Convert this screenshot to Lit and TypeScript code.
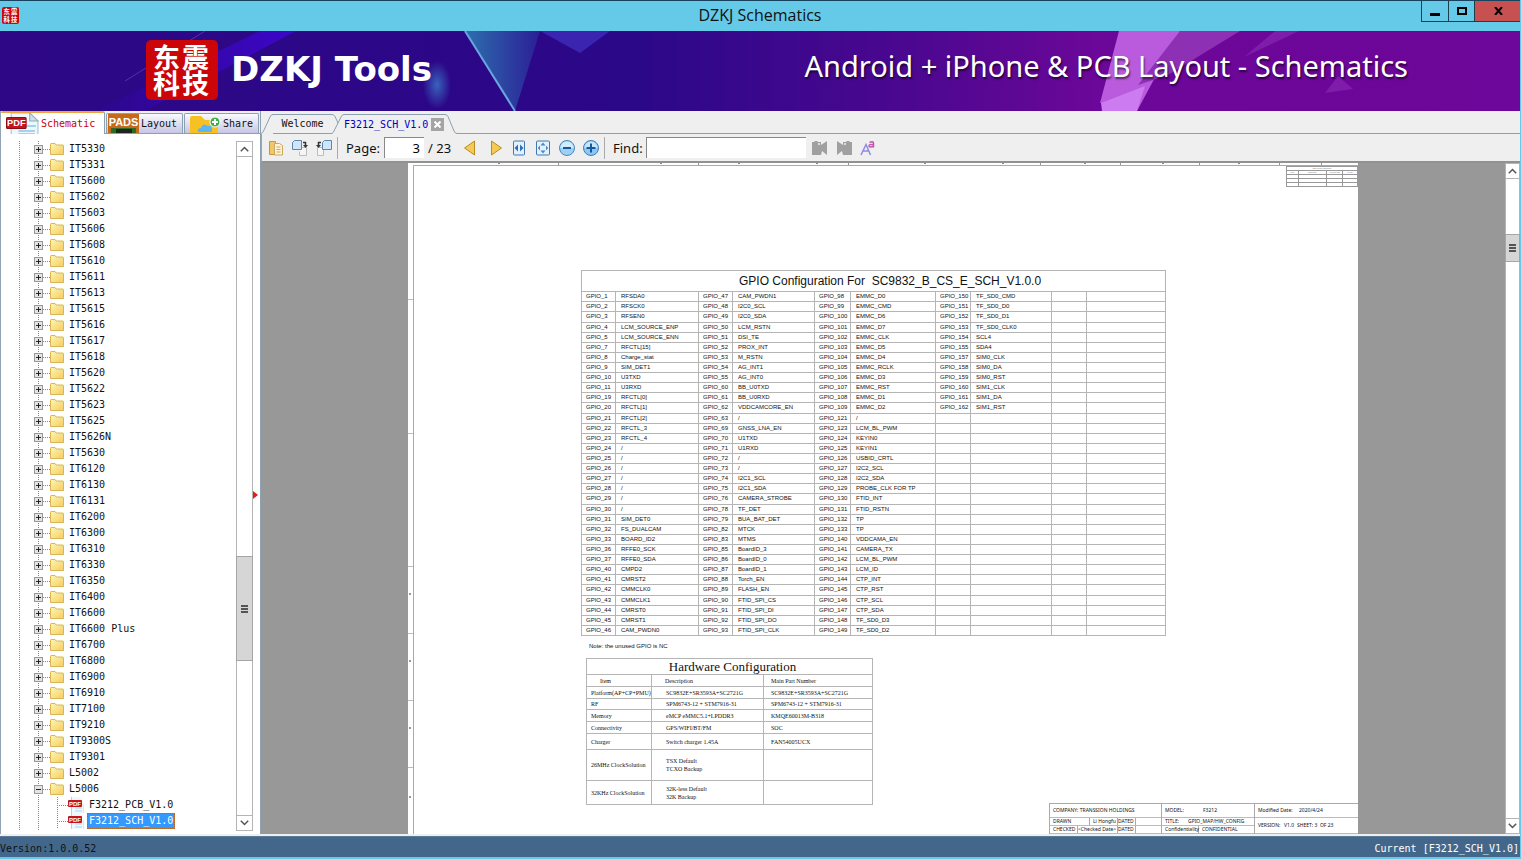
import { LitElement, html, css, svg } from "lit";
import { customElement, property, state } from "lit/decorators.js";

const FOLDERS = [
  "IT5330", "IT5331", "IT5600", "IT5602", "IT5603", "IT5606", "IT5608", "IT5610", "IT5611", "IT5613",
  "IT5615", "IT5616", "IT5617", "IT5618", "IT5620", "IT5622", "IT5623", "IT5625", "IT5626N", "IT5630",
  "IT6120", "IT6130", "IT6131", "IT6200", "IT6300", "IT6310", "IT6330", "IT6350", "IT6400", "IT6600",
  "IT6600 Plus", "IT6700", "IT6800", "IT6900", "IT6910", "IT7100", "IT9210", "IT9300S", "IT9301", "L5002",
];

const GPIO_COLUMNS: [string, string][] = [
  ["1 2 3 4 5 7 8 9 10 11 19 20 21 22 23 24 25 26 27 28 29 30 31 32 33 36 37 40 41 42 43 44 45 46",
    "RFSDA0|RFSCK0|RFSEN0|LCM_SOURCE_ENP|LCM_SOURCE_ENN|RFCTL[15]|Charge_stat|SIM_DET1|U3TXD|U3RXD|RFCTL[0]|RFCTL[1]|RFCTL[2]|RFCTL_3|RFCTL_4|/|/|/|/|/|/|/|SIM_DET0|FS_DUALCAM|BOARD_ID2|RFFE0_SCK|RFFE0_SDA|CMPD2|CMRST2|CMMCLK0|CMMCLK1|CMRST0|CMRST1|CAM_PWDN0"],
  ["47 48 49 50 51 52 53 54 55 60 61 62 63 69 70 71 72 73 74 75 76 78 79 82 83 85 86 87 88 89 90 91 92 93",
    "CAM_PWDN1|I2C0_SCL|I2C0_SDA|LCM_RSTN|DSI_TE|PROX_INT|M_RSTN|AG_INT1|AG_INT0|BB_U0TXD|BB_U0RXD|VDDCAMCORE_EN|/|GNSS_LNA_EN|U1TXD|U1RXD|/|/|I2C1_SCL|I2C1_SDA|CAMERA_STROBE|TF_DET|BUA_BAT_DET|MTCK|MTMS|BoardID_3|BoardID_0|BoardID_1|Torch_EN|FLASH_EN|FTID_SPI_CS|FTID_SPI_DI|FTID_SPI_DO|FTID_SPI_CLK"],
  ["98 99 100 101 102 103 104 105 106 107 108 109 121 123 124 125 126 127 128 129 130 131 132 133 140 141 142 143 144 145 146 147 148 149",
    "EMMC_D0|EMMC_CMD|EMMC_D6|EMMC_D7|EMMC_CLK|EMMC_D5|EMMC_D4|EMMC_RCLK|EMMC_D3|EMMC_RST|EMMC_D1|EMMC_D2|/|LCM_BL_PWM|KEYIN0|KEYIN1|USBID_CRTL|I2C2_SCL|I2C2_SDA|PROBE_CLK FOR TP|FTID_INT|FTID_RSTN|TP|TP|VDDCAMA_EN|CAMERA_TX|LCM_BL_PWM|LCM_ID|CTP_INT|CTP_RST|CTP_SCL|CTP_SDA|TF_SD0_D3|TF_SD0_D2"],
  ["150 151 152 153 154 155 157 158 159 160 161 162",
    "TF_SD0_CMD|TF_SD0_D0|TF_SD0_D1|TF_SD0_CLK0|SCL4|SDA4|SIM0_CLK|SIM0_DA|SIM0_RST|SIM1_CLK|SIM1_DA|SIM1_RST"],
];

const GPIO = GPIO_COLUMNS.map(([pins, names]) => {
  const labels = names.split("|");
  return pins.split(" ").map((p, i) => [`GPIO_${p}`, labels[i]]);
});

const HARDWARE = [
  ["h12", "Platform(AP+CP+PMU)", "SC9832E+SR3593A+SC2721G", "SC9832E+SR3593A+SC2721G"],
  ["h11", "RF", "SPM6743-12 + STM7916-31", "SPM6743-12 + STM7916-31"],
  ["h12", "Memory", "eMCP eMMC5.1+LPDDR3", "KMQE60013M-B318"],
  ["h12", "Connectivity", "GPS/WIFI/BT/FM", "SOC"],
  ["h16", "Charger", "Switch charger 1.45A", "FAN54005UCX"],
  ["h31", "26MHz ClockSolution", "TSX Default\nTCXO Backup", ""],
  ["h24", "32KHz ClockSolution", "32K-less Default\n32K Backup", ""],
];

const chevron = (down: boolean) => html`<svg width="9" height="6" viewBox="0 0 9 6">
  <path d=${down ? "M.8.8 4.5 4.5 8.2.8" : "M.8 5.2 4.5 1.5 8.2 5.2"} fill="none" stroke="#555" stroke-width="1.5"/></svg>`;

const folderIcon = html`<svg width="14" height="12" viewBox="0 0 14 12">
  <defs><linearGradient id="fold" x2="1" y2="1"><stop stop-color="#fff6b8"/><stop offset="1" stop-color="#f3cd62"/></linearGradient></defs>
  <path d="M.5 11.5V1.2Q.5.5 1.2.5H5l1.2 1.5h6.6q.7 0 .7.7v8.8z" fill="url(#fold)" stroke="#dcb552"/></svg>`;

const pdfIcon = (w: number, h: number) => html`<svg width=${w} height=${h} viewBox="0 0 32 22" preserveAspectRatio="none">
  <path d="M5 0h18l8 8v14H5z" fill="#eef7fc" stroke="#9fc0d4"/>
  <path d="M23 0v8h8z" fill="#cfe0ea" stroke="#8eaec0"/>
  <path d="M20 13h9M12 18h16M12 21h16" stroke="#9fd3f0" stroke-width="2"/>
  <rect x=".5" y="4.500" width="19" height="11" rx="1" fill="#c4151f" stroke="#8d0b12"/>
  <text x="10" y="13.500" font-size="9" font-weight="700" fill="#fff" text-anchor="middle" font-family="Liberation Sans, sans-serif">PDF</text></svg>`;

const smallPdfIcon = html`<svg width="16" height="16" viewBox="0 0 16 16">
  <path d="M3.500 0v16M15 7v9" stroke="#b9cfdc" fill="none"/><path d="M4 0h9l2 2v14H4z" fill="#f0f8fc"/>
  <path d="M7 11h7M7 14h7" stroke="#a5d6f0"/>
  <rect x="0" y="3" width="14" height="7" rx="1" fill="#c4151f"/>
  <text x="7" y="9" font-size="6" font-weight="700" fill="#fff" text-anchor="middle" font-family="Liberation Sans, sans-serif">PDF</text></svg>`;

const sealIcon = (size: number) => html`<svg width=${size} height=${size} viewBox="0 0 16 16">
  <rect width="16" height="16" rx="2" fill="#c8060c"/>
  <g font-family="Noto Sans CJK SC, sans-serif" font-size="6" font-weight="700" fill="#fff">
    <text x="1.500" y="7">东</text><text x="8.500" y="7">震</text><text x="1.500" y="14">科</text><text x="8.500" y="14">技</text>
  </g></svg>`;

const toolIcons: Record<string, unknown> = {
  Contents: svg`<path d="M1.500 1.500h6v13h-6z" fill="#f1c766" stroke="#c89632"/><path d="M6.500 3.500h5l3 2v9.500h-8z" fill="#fff3d6" stroke="#c9a866"/><path d="M8.500 7h4M8.500 9.500h4M8.500 12h4" stroke="#caa75c"/>`,
  "Rotate right": svg`<path d="M8.500 7.500h6v8h-7v-4" fill="#f5f5f5" stroke="#b9bcc0"/><path d="M2.500.5h7v9h-9v-7z" fill="#cfe6fa" stroke="#5c86b0"/><path d="M11 2.500h2.500V6" fill="none" stroke="#333" stroke-width="1.500"/><path d="M11 5h5l-2.500 3z" fill="#333"/>`,
  "Rotate left": svg`<path d="M1.500 7.500h6v8h-6z" fill="#f5f5f5" stroke="#b9bcc0"/><path d="M8.500.5h7v9h-9v-7z" fill="#cfe6fa" stroke="#5c86b0"/><path d="M5 2.500H2.500V6" fill="none" stroke="#333" stroke-width="1.500"/><path d="M0 5h5L2.500 8z" fill="#333"/>`,
  "Previous page": svg`<path d="M11.500 1v14L1.500 8z" fill="#f2ca55" stroke="#bd8c1c"/>`,
  "Next page": svg`<path d="M4.500 1v14l10-7z" fill="#f2ca55" stroke="#bd8c1c"/>`,
  "Fit width": svg`<rect x="2.500" y="1" width="11" height="14" rx="1" fill="#e3f1fd" stroke="#3f78b5"/><path d="M7 4.500v7L3.500 8zM9 4.500v7L12.500 8z" fill="#2f6fb8"/>`,
  "Fit page": svg`<rect x="1.500" y="1" width="13" height="14" rx="1" fill="#e3f1fd" stroke="#3f78b5"/><path d="M5.500 5.500 8 2.500l2.500 3zM5.500 10.500 8 13.500l2.500-3zM5 5.500 2.800 8 5 10.500zM11 5.500 13.200 8 11 10.500z" fill="#4a86c6"/>`,
  "Zoom out": svg`<circle cx="8" cy="8" r="7.500" fill="#9fd0f3" stroke="#4489c0"/><path d="M1.500 8a6.500 6.500 0 0 1 13 0z" fill="#d3ecfc"/><path d="M4 8h8" stroke="#175a9c" stroke-width="2"/>`,
  "Zoom in": svg`<circle cx="8" cy="8" r="7.500" fill="#8cc6f1" stroke="#3a7fb8"/><path d="M1.500 8a6.500 6.500 0 0 1 13 0z" fill="#c5e5fb"/><path d="M3.500 8h9M8 3.500v9" stroke="#175a9c" stroke-width="2"/>`,
  "Find previous": svg`<path d="M0 2h2l1-1h2l1 1h3v3l6-4v14l-5-4-1 4H0z" fill="#a0a0a0"/><circle cx="7" cy="4" r="1" fill="#efefef"/>`,
  "Find next": svg`<path d="M16 2h-2l-1-1h-2l-1 1H7v3L1 1v14l5-4 1 4h9z" fill="#a0a0a0"/><circle cx="9" cy="4" r="1" fill="#efefef"/>`,
  "Match case": svg`<path d="M1 15 6 4.500 10.500 15M3 11h6" fill="none" stroke="#8f8be0" stroke-width="1.500"/><path d="M9.500 2.500q4-2 4 1v4M13.500 4.500q-4.500-.5-4.500 1.500t4.500.3" fill="none" stroke="#c455ae" stroke-width="1.500"/>`,
};

@customElement("side-scrollbar")
class SideScrollbar extends LitElement {
  @property({ type: Number }) before = 0;
  @property({ type: Number }) thumb = 30;
  @property({ type: Number }) after = 0;
  static styles = css`
    :host { display: flex; flex-direction: column; width: 17px; box-sizing: border-box; background: #fff; }
    button { flex: none; display: grid; place-items: center; height: 16px; padding: 0; background: #fff; border: 1px solid #b4b4b4; }
    .track { flex: 1; min-height: 0; display: flex; flex-direction: column; border: solid #b4b4b4; border-width: 0 1px; }
    .thumb { flex: none; box-sizing: border-box; margin: 0 -1px; display: flex; flex-direction: column; gap: 1px; align-items: center; justify-content: center; background: #d6d6d6; border: 1px solid #a5a5a5; }
    .thumb i { width: 7px; height: 2px; background: #555; }
  `;
  render() {
    return html`<button aria-label="Scroll up">${chevron(false)}</button>
      <div class="track">
        <div style="flex-grow:${this.before}"></div>
        <div class="thumb" style="height:${this.thumb}px"><i></i><i></i><i></i></div>
        <div style="flex-grow:${this.after}"></div>
      </div>
      <button aria-label="Scroll down">${chevron(true)}</button>`;
  }
}

@customElement("folder-tree")
class FolderTree extends LitElement {
  @state() selected = "F3212_SCH_V1.0";
  static styles = css`
    :host { display: flex; min-height: 0; font: 10px/16px "DejaVu Sans Mono", monospace; color: #111; background: #fff; padding: 7px 7px 3px 0; }
    ul { flex: 1; min-width: 0; margin: 0; padding: 0; list-style: none; overflow: hidden; }
    li { display: flex; align-items: center; height: 16px; padding-left: 33px;
      background: linear-gradient(#888 50%, transparent 50%) 18px 0 / 1px 2px repeat-y, linear-gradient(#888 50%, transparent 50%) 37px 0 / 1px 2px repeat-y; }
    .expander { width: 9px; height: 9px; padding: 0; display: grid; place-items: center; background: #e4e4e4; border: 1px solid #999; box-sizing: border-box; }
    .dash { width: 7px; height: 1px; background: linear-gradient(90deg, #888 50%, transparent 50%) 0 0 / 2px 1px; }
    .name { height: 16px; padding: 0 1px; margin-left: 3px; border: 1px solid transparent; background: none; color: inherit; font: inherit; line-height: 14px; white-space: pre; }
    .child { padding-left: 56px; }
    .child .branch { flex: none; width: 11px; height: 16px;
      background: linear-gradient(90deg, #888 50%, transparent 50%) 0 8px / 2px 1px repeat-x, linear-gradient(#888 50%, transparent 50%) 0 0 / 1px 2px repeat-y; }
    .name.selected { background: #3399ff; color: #fff; border: 1px dotted #b8641c; }
    svg { display: block; flex: none; }
  `;
  folder(name: string, open = false) {
    return html`<li>
      <button class="expander" aria-label=${open ? "Collapse" : "Expand"}><svg width="7" height="7"><path d=${open ? "M1 3.500h5" : "M1 3.500h5M3.500 1v5"} stroke="#222"/></svg></button>
      <span class="dash"></span>${folderIcon}
      <button class="name">${name}</button></li>`;
  }
  file(name: string) {
    return html`<li class="child"><span class="branch"></span>${smallPdfIcon}
      <button class="name ${this.selected === name ? "selected" : ""}" @click=${() => (this.selected = name)}>${name}</button></li>`;
  }
  render() {
    return html`<ul>
        ${FOLDERS.map((n) => this.folder(n))}
        ${this.folder("L5006", true)}
        ${this.file("F3212_PCB_V1.0")}
        ${this.file("F3212_SCH_V1.0")}
        ${this.folder("")}
      </ul>
      <side-scrollbar .before=${399} .thumb=${105} .after=${154}></side-scrollbar>`;
  }
}

@customElement("schematic-sheet")
class SchematicSheet extends LitElement {
  static styles = css`
    :host { display: flex; flex-direction: column; width: 950px; background: #fff; color: #111; overflow: hidden; font: 6px/8px "Liberation Sans", Arial, sans-serif; }
    .ruler { flex: none; display: block; height: 2px; width: 100%; }
    .body { flex: 1; min-height: 0; display: flex; }
    .rail { flex: none; width: 5px; }
    .frame { flex: 1; min-width: 0; display: flex; flex-direction: column; border: solid #aaa; border-width: 1px 0 0 1px; }
    .drawing { flex: 1; min-height: 0; }
    table { border-collapse: collapse; table-layout: fixed; }
    td, th { padding: 0; border: 1px solid #b5b5b5; font-weight: 400; text-align: left; white-space: pre; overflow: visible; }
    .revision { width: 71px; margin-left: auto; color: #777; font: 2px/3px "Liberation Sans", sans-serif; border-right: none; }
    .revision td, .revision th { height: 3px; text-align: center; border-color: #999; }
    .gpio { width: 585px; height: 366px; margin: 83px 0 0 167px; }
    .gpio th { height: 20px; font-size: 12px; line-height: 20px; text-align: center; padding-left: 33px; }
    .gpio td { height: 9px; line-height: 9px; padding-left: 4px; }
    .gpio td:nth-child(even) { padding-left: 5px; }
    .note { margin: 6px 0 8px 175px; }
    .hardware { width: 287px; margin-left: 172px; font: 6px/8px "Liberation Serif", "Times New Roman", serif; }
    .hardware .caption { height: 15px; font-size: 13px; line-height: 15px; text-align: center; padding-left: 6px; }
    .hardware .heads th { height: 11px; padding-left: 13px; }
    .hardware .heads th + th + th { padding-left: 7px; }
    .hardware td { padding-left: 4px; }
    .hardware td + td { padding-left: 14px; }
    .hardware td + td + td { padding-left: 7px; }
    .h11 td { height: 10px; } .h12 td { height: 11px; } .h16 td { height: 15px; } .h31 td { height: 30px; } .h24 td { height: 23px; }
    .block { flex: none; margin-left: auto; display: grid; grid-template-columns: 112px 93px 104px; font: 5px/7px "Noto Sans", sans-serif; border-top: 1px solid #aaa; height: 31px; box-sizing: border-box; }
    .block > div { display: grid; grid-template-rows: 14px 8px 8px; border-left: 1px solid #aaa; }
    .block > .wide { grid-template-rows: 14px 16px; }
    .line { display: flex; align-items: center; border-bottom: 1px solid #bbb; white-space: pre; }
    .line span { padding-left: 3px; box-sizing: border-box; height: 100%; display: flex; align-items: center; }
    .w18 { width: 18px; border-right: 1px solid #aaa; } .w37 { width: 37px; border-right: 1px solid #aaa; }
    .line .tight { padding-left: 0; } .w38 { width: 38px; } .w26 { width: 26px; } .w44 { width: 44px; }
    .w28 { width: 28px; border-right: 1px solid #aaa; } .w40 { width: 40px; border-right: 1px solid #aaa; }
  `;
  render() {
    const marks = [90, 252, 330, 408, 516, 594, 676, 754, 830];
    return html`
      <svg class="ruler">
        ${[150, 290, 440, 632, 712, 791, 871, 913].map((x) => svg`<path d="M${x}.5 0v3" stroke="#999"/>`)}
        ${marks.map((x) => svg`<rect x=${x} y="0" width="2" height="1" fill="#888"/>`)}
      </svg>
      <div class="body">
        <svg class="rail" height="100%">
          ${[134, 268, 401, 468, 535, 602].map((y) => svg`<path d="M0 ${y}.5h5" stroke="#bbb"/>`)}
          ${[428, 495, 562, 631].map((y) => svg`<rect x="1" y=${y} width="2" height="2" fill="#999"/>`)}
        </svg>
        <div class="frame">
          <div class="drawing">
            <table class="revision">
              <colgroup><col width="12"><col width="28"><col width="16"><col width="15"></colgroup>
              <tr><th colspan="4">REVISION RECORD</th></tr>
              <tr><th>LTR</th><th>ECO NO:</th><th>APPROVED</th><th>DATE</th></tr>
              ${[0, 1, 2].map(() => html`<tr><td></td><td></td><td></td><td></td></tr>`)}
            </table>
            <table class="gpio">
              <colgroup>${[34, 83, 34, 82, 36, 85, 35, 81, 35, 79].map((w) => html`<col width=${w}>`)}</colgroup>
              <tr><th colspan="10">GPIO Configuration For  SC9832_B_CS_E_SCH_V1.0.0</th></tr>
              ${GPIO[0].map((_, r) => html`<tr>${[0, 1, 2, 3, 4].map((c) => html`<td>${GPIO[c]?.[r]?.[0] ?? ""}</td><td>${GPIO[c]?.[r]?.[1] ?? ""}</td>`)}</tr>`)}
            </table>
            <div class="note">Note: the unused GPIO is NC</div>
            <table class="hardware">
              <colgroup><col width="65"><col width="112"><col width="109"></colgroup>
              <tr><th class="caption" colspan="3">Hardware Configuration</th></tr>
              <tr class="heads"><th>Item</th><th>Description</th><th>Main Part Number</th></tr>
              ${HARDWARE.map(([h, a, b, c]) => html`<tr class=${h}><td>${a}</td><td>${b}</td><td>${c}</td></tr>`)}
            </table>
          </div>
          <div class="block">
            <div>
              <div class="line"><span>COMPANY: TRANSSION HOLDINGS</span></div>
              <div class="line"><span class="w40">DRAWN</span><span class="w28">Li Hongfu</span><span class="w18 tight">DATED</span></div>
              <div class="line"><span class="w28">CHECKED</span><span class="w40 tight">&lt;Checked Date&gt;</span><span class="w18 tight">DATED</span></div>
            </div>
            <div>
              <div class="line"><span class="w38">MODEL:</span><span>F3212</span></div>
              <div class="line"><span class="w26">TITLE:</span><span class="tight">GPIO_MAP/HW_CONFIG</span></div>
              <div class="line"><span class="w37">Confidentiality</span><span>CONFIDENTIAL</span></div>
            </div>
            <div class="wide">
              <div class="line"><span class="w44">Modified Date:</span><span class="tight">2020/4/24</span></div>
              <div class="line"><span class="w26">VERSION:</span><span>V1.0</span><span>SHEET: 3  OF 23</span></div>
            </div>
          </div>
        </div>
      </div>`;
  }
}

@customElement("app-root")
class AppRoot extends LitElement {
  @state() page = "3";
  static styles = css`
    :host { display: flex; flex-direction: column; height: 100vh; box-sizing: border-box; border: solid #65cae8; border-width: 0 1px 2px 0; background: #efefef; font: 13px/18px "Noto Sans", sans-serif; color: #111; overflow: hidden; }
    button { padding: 0; border: none; background: none; color: inherit; font: inherit; display: grid; place-items: center; }
    svg { display: block; }
    .titlebar { flex: none; height: 31px; box-sizing: border-box; border-top: 1px solid #17435f; background: #65cae8; display: grid; grid-template-columns: 1fr auto 1fr; align-items: start; }
    .seal { padding: 6px 0 0 2px; }
    .title { font: 16px/29px "Open Sans", sans-serif; margin: 0; }
    .window { display: flex; justify-self: end; height: 20px; border: solid #1d3e4a; border-width: 0 0 1px 1px; margin-right: -1px; }
    .window button { width: 27px; border-right: 1px solid #1d3e4a; }
    .window .max { width: 26px; }
    .window .close { width: 46px; background: #c75050; border: none; }
    .banner { flex: none; position: relative; height: 80px; box-sizing: border-box; background: linear-gradient(90deg, #2d0786 0%, #2b0888 42%, #4c0790 60%, #6b0799 72%, #6d069a 100%); color: #fff; display: flex; align-items: center; overflow: hidden; padding: 0 112px 2px 146px; }
    .art { position: absolute; inset: 0; width: 100%; height: 100%; }
    .logo, .brand, .tag { position: relative; }
    .logo { display: grid; grid-template-columns: 29px 29px; justify-content: center; align-content: center; box-sizing: border-box; width: 72px; height: 60px; border-radius: 5px; background: #cb0508; font: 700 27px/26px "Noto Sans CJK SC", sans-serif; }
    .brand { margin: 0 0 2px 13px; font: 700 34px/44px "DejaVu Sans", sans-serif; }
    .tag { margin: 0 0 8px auto; font: 400 29px/40px "Noto Sans", sans-serif; text-shadow: 1px 2px 2px #0009; }
    .work { flex: 1; min-height: 0; display: grid; grid-template-columns: 261px minmax(0, 1fr); }
    .side { position: relative; display: flex; flex-direction: column; min-height: 0; border-right: 1px solid #8ca0b2; border-left: 1px solid #93a5b4; background: #fff; box-sizing: border-box; }
    .side folder-tree { flex: 1; }
    .sidetabs { flex: none; height: 23px; box-sizing: border-box; display: flex; align-items: end; gap: 1px; background: #efefef; border-bottom: 1px solid #8ca0b2; font: 10px/20px "DejaVu Sans Mono", monospace; }
    .sidetabs button { display: flex; align-items: center; gap: 2px; height: 20px; box-sizing: border-box; border: 1px solid #8ca0b2; border-bottom: none; background: linear-gradient(#fafaff, #c5c6e4); overflow: hidden; border-radius: 2px 2px 0 0; }
    .sidetabs .on { height: 23px; width: 104px; margin-bottom: -1px; padding-left: 5px; background: #fff; color: #c8000a; border-top: 2px solid #f3a33c; border-left: none; }
    .sidetabs .layout { width: 77px; padding-left: 1px; } .sidetabs .share { width: 75px; padding-left: 4px; }
    .split { position: absolute; right: 2px; top: 380px; }
    .main { display: flex; flex-direction: column; min-width: 0; min-height: 0; }
    .tabs { flex: none; height: 23px; display: flex; align-items: end; box-sizing: border-box; font: 10px/18px "DejaVu Sans Mono", monospace; }
    .tab { display: flex; align-items: center; height: 20px; box-sizing: border-box; border-top: 1px solid #8ca0b2; margin: 0; white-space: nowrap; }
    .tab.off { border-bottom: 1px solid #8ca0b2; width: 59px; }
    .tab.off button { margin: auto; }
    .tab.cur { color: #0000c8; width: 101px; gap: 3px; }
    .x { width: 13px; height: 13px; background: #a4a4a4; }
    .rest { flex: 1; height: 20px; box-sizing: border-box; border-bottom: 1px solid #8ca0b2; }
    .toolbar { flex: none; height: 29px; box-sizing: border-box; display: flex; align-items: center; padding-left: 2px; border-bottom: 2px solid #929292; border-left: 1px solid #9aa; }
    .toolbar button { width: 24px; height: 24px; flex: none; }
    .sep { width: 1px; height: 22px; margin: 0 8px 0 1px; background: #aaa; }
    .lp { width: 38px; } .lf { width: 33px; } .total { width: 31px; padding-left: 4px; white-space: nowrap; }
    input { box-sizing: border-box; height: 21px; border: solid #888; border-width: 1px 0 0 1px; background: #fff; font: inherit; padding: 0 4px; margin: 0; border-radius: 0; outline: none; }
    .page { width: 40px; text-align: right; } .find { width: 160px; margin-right: 2px; }
    .viewer { flex: 1; min-height: 0; display: grid; grid-template-columns: minmax(0, 1fr) 15px; background: #989898; }
    .canvas { display: flex; justify-content: center; min-width: 0; min-height: 0; overflow: hidden; }
    .viewer side-scrollbar { width: 15px; }
    .status { flex: none; height: 21px; margin-top: 2px; box-sizing: border-box; border-top: 1px solid #5b7a98; padding-top: 4px; background: #43678a; display: flex; align-items: center; justify-content: space-between; font: 10px/16px "DejaVu Sans Mono", monospace; }
    .status .cur { color: #fff; padding-right: 1px; }
  `;

  tool(name: string) {
    return html`<button aria-label=${name} title=${name}><svg width="16" height="16" viewBox="0 0 16 16">${toolIcons[name]}</svg></button>`;
  }

  render() {
    return html`
      <header class="titlebar">
        <div class="seal">${sealIcon(17)}</div>
        <h1 class="title">DZKJ Schematics</h1>
        <div class="window">
          <button aria-label="Minimize"><svg width="10" height="10"><path d="M0 8.500h10" stroke="#000" stroke-width="3"/></svg></button>
          <button class="max" aria-label="Maximize"><svg width="10" height="8"><path d="M1 1h8v6H1z" fill="none" stroke="#000" stroke-width="2"/></svg></button>
          <button class="close" aria-label="Close"><svg width="9" height="8"><path d="M1 0 8 8M8 0 1 8" stroke="#000" stroke-width="2"/></svg></button>
        </div>
      </header>
      <section class="banner">
        <svg class="art" viewBox="0 0 1520 80" preserveAspectRatio="none">
          <defs><radialGradient id="glow"><stop stop-color="#3b79c8" stop-opacity=".8"/><stop offset="1" stop-color="#3b79c8" stop-opacity="0"/></radialGradient>
          <linearGradient id="beam" x2="1"><stop stop-color="#2c078a"/><stop offset="1" stop-color="#3d06c8"/></linearGradient>
          <linearGradient id="tri" x2="1"><stop stop-color="#2d6fae"/><stop offset="1" stop-color="#2b1e96"/></linearGradient></defs>
          <path d="M260 0h36L145 80H95z" fill="url(#beam)"/>
          <path d="M205 0 125 50" stroke="#5330b0"/>
          <ellipse cx="437" cy="54" rx="14" ry="24" fill="url(#glow)"/>
          <path d="M465 0h75L515 80z" fill="url(#tri)"/><path d="M465 0 515 80" stroke="#6aa5e0" stroke-width="2"/>
          <path d="M540 0h70l-30 22z" fill="#3a24b0"/>
          <path d="M1119 0h61l-43 80h-35v-8h-2z" fill="#b95bdc"/><path d="M1101 72 1145 55 1137 80h-35z" fill="#cc7bf0"/>
          <path d="M1180 0h60l-72 44-30 10z" fill="#8e30b4"/><path d="M1275 0h24l-55 26z" fill="#7f1dab"/>
          <path d="M1338 45 1353 58 1325 62z" fill="#7f1dab"/>
        </svg>
        <div class="logo"><span>东</span><span>震</span><span>科</span><span>技</span></div>
        <p class="brand">DZKJ Tools</p>
        <p class="tag">Android + iPhone &amp; PCB Layout - Schematics</p>
      </section>
      <div class="work">
        <aside class="side">
          <nav class="sidetabs">
            <button class="on">${pdfIcon(33, 22)}Schematic</button>
            <button class="layout"><svg width="31" height="20"><rect width="31" height="20" fill="#c56a1c"/><path d="M3 14h25v6H3z" fill="#2d6b24"/><path d="M8 15h16v5H8z" fill="#222"/><text x="15.500" y="12" font-size="11" font-weight="700" fill="#fff" text-anchor="middle" font-family="Liberation Sans, sans-serif">PADS</text></svg>Layout</button>
            <button class="share"><svg width="32" height="20"><path d="M1 20V4q0-2 2-2h9l4 4h10q3 0 3 3v11z" fill="#f7c123"/><path d="M9 18q-1-4 3-4 2-6 7-2 4-1 4 4v2z" fill="#5fb6ec"/><circle cx="26" cy="8" r="5" fill="#3fae49" stroke="#fff"/><path d="M23 8h6M26 5v6" stroke="#fff" stroke-width="2"/></svg>Share</button>
          </nav>
          <folder-tree></folder-tree>
          <svg class="split" width="5" height="8"><path d="M0 0 5 4 0 8z" fill="#e02010"/></svg>
        </aside>
        <main class="main">
          <div class="tabs">
            <svg width="12" height="20"><path d="M0 19.500Q2 19 3 16L9 3Q10 .5 12 .5" fill="none" stroke="#8ca0b2"/></svg>
            <div class="tab off"><button>Welcome</button></div>
            <svg width="12" height="20"><path d="M0 .5q2 0 3 2L6 9M0 19.500Q1 19 2 17L9 3Q10 .5 12 .5" fill="none" stroke="#8ca0b2"/></svg>
            <div class="tab cur"><button>F3212_SCH_V1.0</button><button class="x" aria-label="Close tab"><svg width="7" height="7"><path d="M.5.5 6.500 6.500M6.500.5.5 6.500" stroke="#fff" stroke-width="2"/></svg></button></div>
            <svg width="12" height="20"><path d="M0 .5q2 0 3 2L9 17q1 2.500 3 2.500" fill="none" stroke="#8ca0b2"/></svg>
            <div class="rest"></div>
          </div>
          <div class="toolbar">
            ${["Contents", "Rotate right", "Rotate left"].map((n) => this.tool(n))}
            <span class="sep"></span>
            <label class="lp" for="page">Page:</label>
            <input id="page" class="page" .value=${this.page}>
            <span class="total">/ 23</span>
            ${["Previous page", "Next page", "Fit width", "Fit page", "Zoom out", "Zoom in"].map((n) => this.tool(n))}
            <span class="sep"></span>
            <label class="lf" for="find">Find:</label>
            <input id="find" class="find">
            ${["Find previous", "Find next", "Match case"].map((n) => this.tool(n))}
          </div>
          <div class="viewer">
            <div class="canvas"><schematic-sheet></schematic-sheet></div>
            <side-scrollbar .before=${55} .thumb=${28} .after=${560}></side-scrollbar>
          </div>
        </main>
      </div>
      <footer class="status"><span>Version:1.0.0.52</span><span class="cur">Current [F3212_SCH_V1.0]</span></footer>`;
  }
}
